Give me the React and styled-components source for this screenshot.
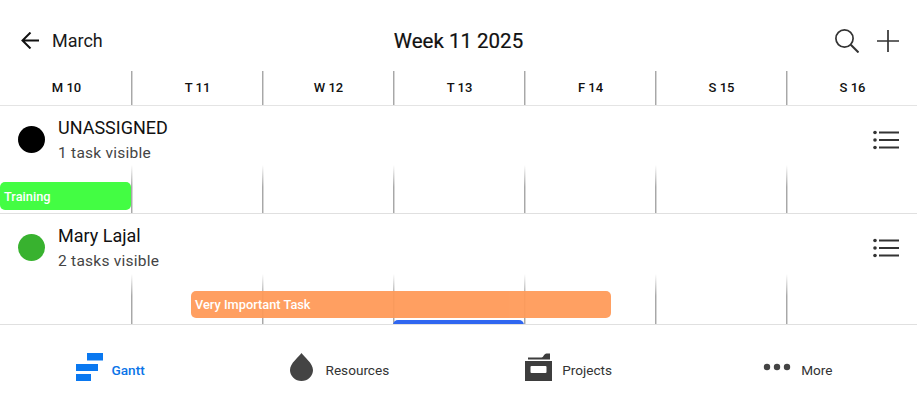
import React from 'react';
import styled, { createGlobalStyle } from 'styled-components';

const GlobalStyle = createGlobalStyle`
  html, body {
    margin: 0;
    background: #fff;
    font-family: Roboto, "Liberation Sans", sans-serif;
    color: #111;
  }
`;

const Page = styled.div`
  width: 917px;
  height: 414px;
  overflow: hidden;
  display: flex;
  flex-direction: column;
  background: #fff;
`;

const Header = styled.header`
  height: 71px;
  flex: none;
  display: grid;
  grid-template-columns: 1fr auto 1fr;
  align-items: center;
  padding: 10px 18px 0 21px;
  box-sizing: border-box;
`;

const BackLink = styled.div`
  display: flex;
  align-items: center;
  gap: 13px;
  font-size: 18px;
  color: #1a1a1a;
`;

const Title = styled.h1`
  margin: 0 0 0 -3px;
  font-size: 20.5px;
  font-weight: 400;
  -webkit-text-stroke: 0.2px #111;
  color: #111;
`;

const Actions = styled.div`
  display: flex;
  justify-content: flex-end;
  align-items: center;
  gap: 18px;
`;

const Days = styled.div`
  height: 35px;
  flex: none;
  display: grid;
  grid-template-columns: repeat(7, 131px);
  border-bottom: 1px solid #e4e4e4;
  box-sizing: border-box;
`;

const Day = styled.div`
  display: flex;
  align-items: center;
  justify-content: center;
  font-size: 13px;
  font-weight: 500;
  color: #111;
  margin-right: -2px;
  padding: 0 0 2px 0;
  background: ${({ $last }) => ($last
    ? 'none'
    : `linear-gradient(#a8a8a8, #a8a8a8) calc(100% - 1px) 0 / 1px 100% no-repeat,
       linear-gradient(#d6d6d6, #d6d6d6) right / 1px 100% no-repeat`)};
`;

const Section = styled.section`
  height: ${({ $height }) => $height}px;
  flex: none;
  display: flex;
  flex-direction: column;
  border-bottom: 1px solid #e0e0e0;
`;

const Owner = styled.div`
  flex: 1;
  display: flex;
  align-items: center;
  gap: 13px;
  padding: ${({ $top }) => $top}px 18px 0 18px;
`;

const Dot = styled.span`
  width: 27px;
  height: 27px;
  border-radius: 50%;
  background: ${({ $color }) => $color};
  flex: none;
`;

const OwnerText = styled.div`
  flex: 1;
  display: flex;
  flex-direction: column;
  gap: 6px;
  margin-top: 1px;
`;

const Name = styled.div`
  font-size: 18px;
  line-height: 20px;
  color: #111;
`;

const Count = styled.div`
  font-size: 15.5px;
  line-height: 18px;
  letter-spacing: 0.25px;
  color: #444;
`;

const Timeline = styled.div`
  position: relative;
  height: ${({ $height }) => $height}px;
  flex: none;
  overflow: hidden;
  display: grid;
  grid-template-columns: repeat(7, 131px);
`;

const Lane = styled.div`
  margin-right: -2px;
  background: ${({ $last }) => ($last
    ? 'none'
    : `linear-gradient(to bottom, rgba(168,168,168,0), #a8a8a8 22px) calc(100% - 1px) 0 / 1px 100% no-repeat,
       linear-gradient(to bottom, rgba(214,214,214,0), #d6d6d6 22px) right / 1px 100% no-repeat`)};
`;

const Bar = styled.div`
  position: absolute;
  left: ${({ $left }) => $left}px;
  top: ${({ $top }) => $top}px;
  width: ${({ $width }) => $width}px;
  height: ${({ $height }) => $height}px;
  background: ${({ $color }) => $color};
  opacity: ${({ $alpha }) => $alpha || 1};
  border-radius: 5px;
  box-sizing: border-box;
  padding-left: ${({ $inset }) => $inset}px;
  display: flex;
  align-items: center;
  font-size: 12.8px;
  font-weight: 500;
  color: #fff;
`;

const TabBar = styled.nav`
  flex: 1;
  display: grid;
  grid-template-columns: repeat(4, 1fr);
`;

const Tab = styled.div`
  display: flex;
  align-items: center;
  justify-content: center;
  gap: ${({ $gap }) => $gap}px;
  font-size: 13.6px;
  font-weight: ${({ $active }) => ($active ? 500 : 400)};
  color: ${({ $active }) => ($active ? '#0a74e8' : '#333')};
  padding: 1px 9px 0 0;
`;

const TabIcon = styled.span`
  display: flex;
  margin-bottom: 6px;
`;

const BackIcon = () => (
  <svg width="18" height="17" viewBox="0 0 18 17" fill="none" stroke="#111" strokeWidth="2">
    <path d="M18 8.500H1.500M9.500 .5l-8 8 8 8" />
  </svg>
);

const SearchIcon = () => (
  <svg width="24" height="24" viewBox="0 0 24 24" fill="none" stroke="#333" strokeWidth="1.7">
    <circle cx="9.500" cy="9.500" r="8.600" />
    <path d="M15.800 15.800l7.700 7.700" strokeWidth="2" />
  </svg>
);

const PlusIcon = () => (
  <svg width="22" height="22" viewBox="0 0 22 22" fill="none" stroke="#333" strokeWidth="1.7">
    <path d="M11 0v22M0 11h22" />
  </svg>
);

const ListIcon = () => (
  <svg width="26" height="20" viewBox="0 0 26 20" fill="#333">
    <circle cx="2" cy="2.500" r="1.800" />
    <circle cx="2" cy="10" r="1.800" />
    <circle cx="2" cy="17.500" r="1.800" />
    <rect x="6" y="1.500" width="20" height="2" />
    <rect x="6" y="9" width="20" height="2" />
    <rect x="6" y="16.500" width="20" height="2" />
  </svg>
);

const GanttIcon = () => (
  <svg width="27" height="28" viewBox="0 0 27 28" fill="#0a78f0">
    <rect x="11" y="0" width="16" height="7.500" />
    <rect x="0" y="11" width="22" height="7" />
    <rect x="0" y="21" width="15" height="7" />
  </svg>
);

const DropIcon = () => (
  <svg width="23" height="28" viewBox="0 0 23 28" fill="#444">
    <path d="M11.500 0C9 4 0 10 0 17a11.500 11 0 0 0 23 0C23 10 14 4 11.500 0z" />
  </svg>
);

const FolderIcon = () => (
  <svg width="27" height="28" viewBox="0 0 27 28" fill="#3d3d3d">
    <path d="M3 4.500h13.500C18.500 4.500 19 .5 21.500 .5H25v6H3z" />
    <path fillRule="evenodd" d="M0 8h27v20H0zM6.500 13a1 1 0 0 0-1 1v5a1 1 0 0 0 1 1h14a1 1 0 0 0 1-1v-5a1 1 0 0 0-1-1z" />
  </svg>
);

const DotsIcon = () => (
  <svg width="28" height="8" viewBox="0 0 28 8" fill="#444">
    <circle cx="4" cy="4" r="3.200" />
    <circle cx="14" cy="4" r="3.200" />
    <circle cx="24" cy="4" r="3.200" />
  </svg>
);

const days = ['M 10', 'T 11', 'W 12', 'T 13', 'F 14', 'S 15', 'S 16'];

const Lanes = () => days.map((day, i) => <Lane key={day} $last={i === days.length - 1} />);

const App = () => (
  <Page>
    <GlobalStyle />
    <Header>
      <BackLink>
        <BackIcon />
        March
      </BackLink>
      <Title>Week 11 2025</Title>
      <Actions>
        <SearchIcon />
        <PlusIcon />
      </Actions>
    </Header>
    <Days>
      {days.map((day, i) => (
        <Day key={day} $last={i === days.length - 1}>{day}</Day>
      ))}
    </Days>

    <Section $height={107}>
      <Owner $top={8}>
        <Dot $color="#000" />
        <OwnerText>
          <Name>UNASSIGNED</Name>
          <Count>1 task visible</Count>
        </OwnerText>
        <ListIcon />
      </Owner>
      <Timeline $height={48}>
        <Lanes />
        <Bar $left={0} $top={17} $width={131} $height={28} $color="#43fd43" $inset={4}>Training</Bar>
      </Timeline>
    </Section>

    <Section $height={110}>
      <Owner $top={7}>
        <Dot $color="#38b22f" />
        <OwnerText>
          <Name>Mary Lajal</Name>
          <Count>2 tasks visible</Count>
        </OwnerText>
        <ListIcon />
      </Owner>
      <Timeline $height={50}>
        <Lanes />
        <Bar $left={191} $top={17} $width={420} $height={27} $color="#ff9a58" $alpha={0.94} $inset={4}>Very Important Task</Bar>
        <Bar $left={393} $top={46} $width={131} $height={27} $color="#2f66f0" />
      </Timeline>
    </Section>

    <TabBar>
      <Tab $active $gap={9}>
        <TabIcon><GanttIcon /></TabIcon>
        Gantt
      </Tab>
      <Tab $gap={13}>
        <TabIcon><DropIcon /></TabIcon>
        Resources
      </Tab>
      <Tab $gap={10}>
        <TabIcon><FolderIcon /></TabIcon>
        Projects
      </Tab>
      <Tab $gap={10}>
        <TabIcon><DotsIcon /></TabIcon>
        More
      </Tab>
    </TabBar>
  </Page>
);

export default App;
